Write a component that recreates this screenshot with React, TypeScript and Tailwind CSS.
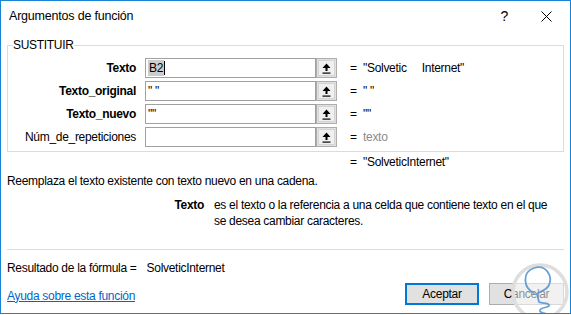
import React from 'react';

const font = { fontFamily: '"Liberation Sans", Arial, sans-serif' };

interface ArgRowProps {
    label: string;
    bold?: boolean;
    value: React.ReactNode;
    result: string;
    muted?: boolean;
}

const RefButton: React.FC = () => (
    <div className="w-[21px] h-[20px] border border-[#adadad] bg-[#e1e1e1] flex items-center justify-center">
        <div className="w-[17px] h-[16px] bg-[#f0f0f0] border border-[#d4d4d4] flex items-center justify-center">
            <svg width="9" height="11" viewBox="0 0 9 11">
                <path d="M4.5 0.5 L8.5 5 L5.5 5 L5.5 8 L3.5 8 L3.5 5 L0.5 5 Z" fill="#000" />
                <rect x="0.5" y="9.5" width="8" height="1.2" fill="#000" />
            </svg>
        </div>
    </div>
);

const ArgRow: React.FC<ArgRowProps> = ({ label, bold, value, result, muted }) => (
    <div className="flex items-center h-[20px]">
        <div className={`w-[123px] text-right ${bold ? 'font-bold' : ''}`}>{label}</div>
        <div className="ml-[9px] w-[171px] h-[20px] border border-[#a0a0a0] bg-white flex items-center pl-[2px]">
            {value}
        </div>
        <RefButton />
        <div className="ml-[13px] w-[13px]">=</div>
        <div className={`whitespace-pre ${muted ? 'text-[#8c8c8c]' : ''}`}>{result}</div>
    </div>
);

const Watermark: React.FC = () => (
    <svg className="absolute left-[508px] top-[259px]" width="63" height="56" viewBox="0 0 63 56">
        <circle cx="31" cy="32" r="27" fill="rgba(255,255,255,0.55)" stroke="#dedede" strokeWidth="3.5" />
        <path
            d="M25 33 C14 28 13 12 25 8 C37 4 44 16 40 25 C37 31 31 31 28 34 L30 42 C33 44 39 42 40 45 C41 48 30 47 31 51 C32 54 38 53 39 55"
            fill="none"
            stroke="#5a97cf"
            strokeWidth="1.8"
            strokeLinecap="round"
            opacity="0.9"
        />
    </svg>
);

const App: React.FC = () => {
    return (
        <div className="w-[571px] h-[315px] bg-white text-[12px] leading-[16px] tracking-[-0.3px] text-black" style={font}>
            <div className="relative h-[314px] border border-[#1883d7] flex flex-col overflow-hidden">
                <div className="h-[30px] flex items-center pl-[8px] shrink-0">
                    <span className="text-[12.5px] tracking-[-0.2px]">Argumentos de función</span>
                    <span className="ml-auto mr-[33px] text-[14px]">?</span>
                    <svg className="mr-[18px]" width="11" height="11" viewBox="0 0 11 11">
                        <path d="M0.5 0.5 L10.5 10.5 M10.5 0.5 L0.5 10.5" stroke="#000" strokeWidth="1" />
                    </svg>
                </div>

                <div className="px-[6px] flex flex-col">
                    <fieldset className="mt-[6px] border border-[#dcdcdc] pl-[5px] pr-[5px] pt-[5px] pb-[4px]">
                        <legend className="px-0 leading-[16px]">SUSTITUIR</legend>
                        <div className="flex flex-col gap-[3px]">
                            <ArgRow
                                label="Texto"
                                bold
                                result={'"Solvetic     Internet"'}
                                value={
                                    <span className="flex items-center">
                                        <span className="bg-[#cccccc] px-[1px]">B2</span>
                                        <span className="w-px h-[14px] bg-black" />
                                    </span>
                                }
                            />
                            <ArgRow label="Texto_original" bold result={'" "'} value={<span>" "</span>} />
                            <ArgRow label="Texto_nuevo" bold result={'""'} value={<span>""</span>} />
                            <ArgRow label="Núm_de_repeticiones" result="texto" muted value={null} />
                        </div>
                    </fieldset>

                    <div className="mt-[2px] h-[16px] flex pl-[343px]">
                        <span className="w-[13px]">=</span>
                        <span>"SolveticInternet"</span>
                    </div>

                    <div className="mt-[3px]">Reemplaza el texto existente con texto nuevo en una cadena.</div>

                    <div className="mt-[8px] flex">
                        <div className="w-[197px] text-right font-bold">Texto</div>
                        <div className="ml-[10px]">
                            es el texto o la referencia a una celda que contiene texto en el que
                            <br />
                            se desea cambiar caracteres.
                        </div>
                    </div>

                    <div className="mt-[20px] h-px bg-[#dcdcdc]" />

                    <div className="mt-[10px] flex">
                        <span>Resultado de la fórmula =</span>
                        <span className="ml-[10px]">SolveticInternet</span>
                    </div>

                    <div className="mt-[7px] flex items-center h-[22px]">
                        <a className="text-[#0066cc] underline pt-[3px]">Ayuda sobre esta función</a>
                        <button className="ml-auto w-[74px] h-[22px] border-2 border-[#0078d7] bg-[#e1e1e1] text-center">
                            Aceptar
                        </button>
                        <button className="ml-[10px] w-[75px] h-[22px] border border-[#adadad] bg-[#e1e1e1] text-center">
                            Cancelar
                        </button>
                    </div>
                </div>

                <Watermark />
            </div>
        </div>
    );
};

export default App;
